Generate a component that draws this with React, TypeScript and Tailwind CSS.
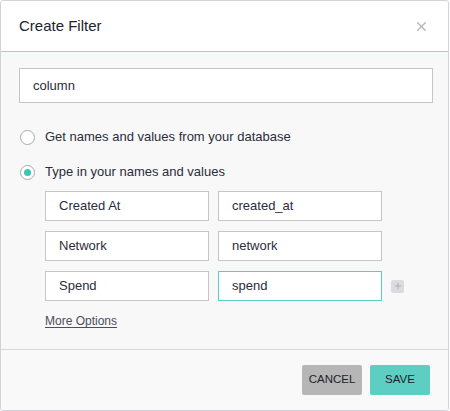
import { X, Plus } from 'lucide-react';

// Create Filter dialog

const rows = [
  { name: 'Created At', value: 'created_at' },
  { name: 'Network', value: 'network' },
  { name: 'Spend', value: 'spend' },
];

function Radio({ checked, label }: { checked?: boolean; label: string }) {
  return (
    <label className="flex items-center gap-[10px] h-[20px]">
      <span className="flex items-center justify-center w-[15px] h-[15px] rounded-full border border-[#a9a9ae] bg-white">
        {checked && <span className="w-[7px] h-[7px] rounded-full bg-[#3ec4b4]" />}
      </span>
      <span className="text-[13px] text-[#2b2d3a]">{label}</span>
    </label>
  );
}

export default function App() {
  return (
    <div className="w-[450px] h-[411px] bg-white" style={{ fontFamily: '"Liberation Sans", Arial, sans-serif' }}>
      <div className="w-[449px] h-[411px] flex flex-col border border-[#d0d3da] rounded-[3px] overflow-hidden bg-[#f8f8f8]">
        {/* Header */}
        <div className="h-[51px] shrink-0 bg-white flex items-center justify-between pl-[18px] pr-[19px] border-b border-[#8fd6cd]">
          <span className="text-[15px] text-[#22232e]">Create Filter</span>
          <X className="w-[15px] h-[15px] text-[#b3b3b3]" strokeWidth={2} />
        </div>

        {/* Body */}
        <div className="flex-1 pt-[16px] pl-[18px]">
          <div className="w-[414px] h-[35px] border border-[#c6c6c6] bg-white flex items-center px-[13px] text-[13px] text-[#2b2d3a]">
            column
          </div>

          <div className="mt-[24px] flex flex-col gap-[15px] pl-[1px]">
            <Radio label="Get names and values from your database" />
            <Radio checked label="Type in your names and values" />
          </div>

          <div className="mt-[9px] pl-[26px] flex flex-col gap-[10px]">
            {rows.map((r, i) => (
              <div key={r.name} className="flex items-center gap-[9px]">
                <div className="w-[164px] h-[30px] border border-[#c6c6c6] bg-white flex items-center px-[13px] text-[13px] text-[#2b2d3a]">
                  {r.name}
                </div>
                <div
                  className={
                    i === 2
                      ? 'w-[164px] h-[30px] border border-[#5ccfc2] bg-white flex items-center px-[13px] text-[13px] text-[#2b2d3a]'
                      : 'w-[164px] h-[30px] border border-[#c6c6c6] bg-white flex items-center px-[13px] text-[13px] text-[#2b2d3a]'
                  }
                >
                  {r.value}
                </div>
                {i === 2 && (
                  <div className="w-[13px] h-[13px] rounded-[2px] bg-[#dcdce0] flex items-center justify-center">
                    <Plus className="w-[10px] h-[10px] text-[#a8a8ae]" strokeWidth={2} />
                  </div>
                )}
              </div>
            ))}
          </div>

          <div className="mt-[11px] pl-[26px] leading-[16px]">
            <span className="text-[12px] text-[#4b4e5c] underline underline-offset-2">More Options</span>
          </div>
        </div>

        {/* Footer */}
        <div className="h-[61px] shrink-0 border-t border-[#d8d8d8] bg-[#f9f9f9] flex items-center justify-end gap-[8px] pr-[18px]">
          <button className="w-[60px] h-[30px] rounded-[2px] bg-[#b6b6b6] text-[11.5px] text-[#22232e]">
            CANCEL
          </button>
          <button className="w-[60px] h-[30px] rounded-[2px] bg-[#5ccfc2] text-[11.5px] text-[#22232e]">
            SAVE
          </button>
        </div>
      </div>
    </div>
  );
}
